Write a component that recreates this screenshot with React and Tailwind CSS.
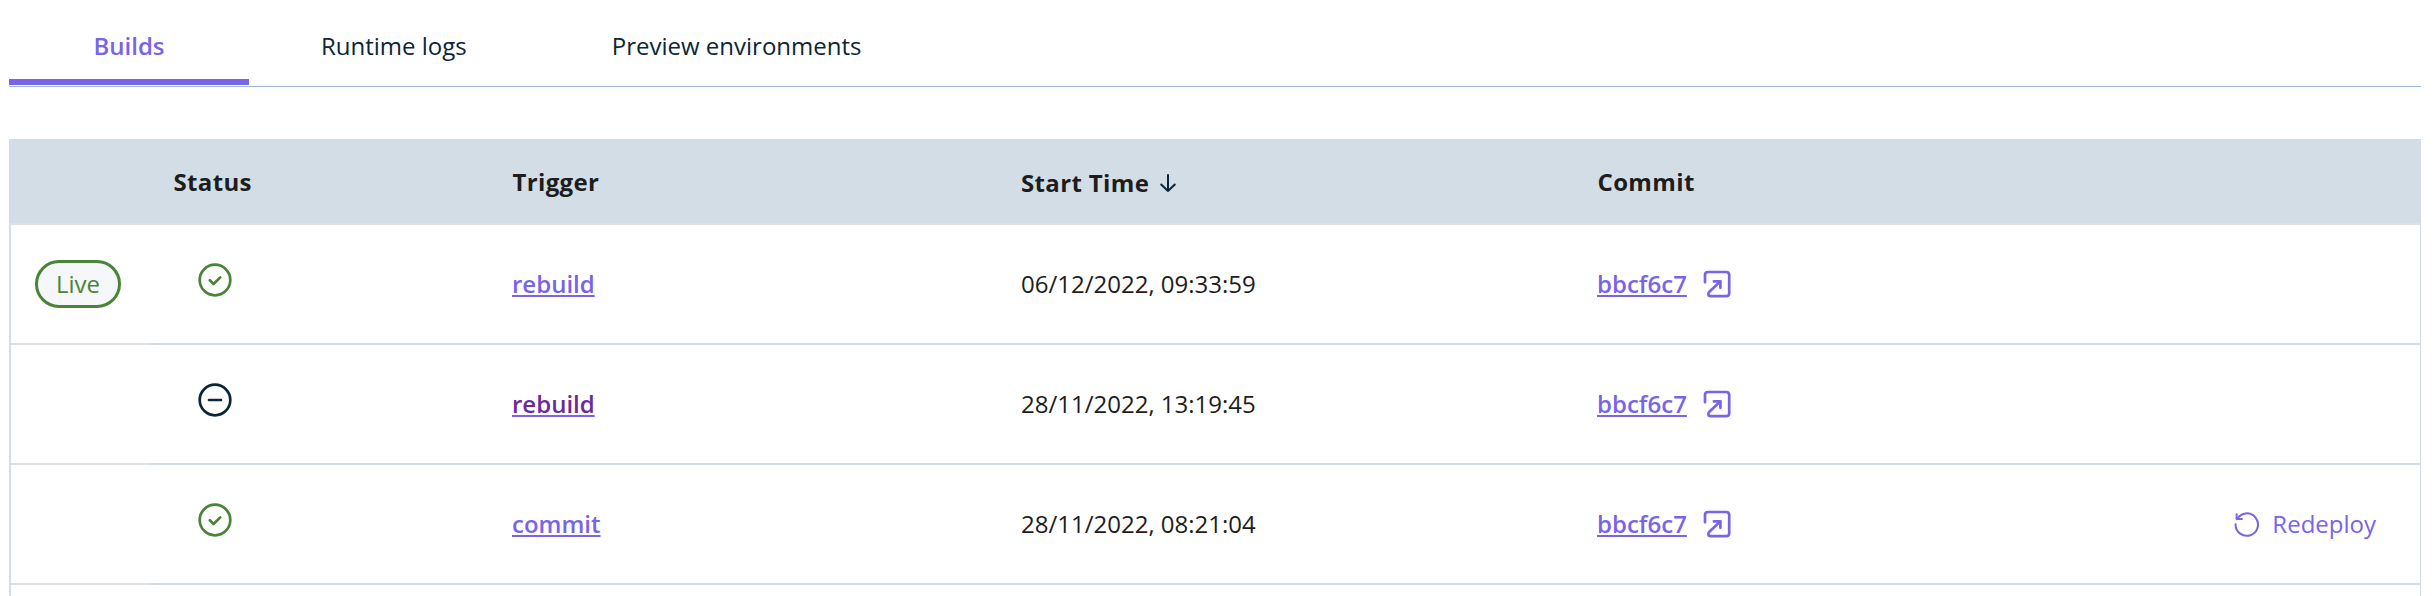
const COLUMNS =
  "grid grid-cols-[138px_339px_508px_576px_1fr]";

function SuccessIcon() {
  return (
    <svg className="h-[34px] w-[34px]" viewBox="0 0 34 34" fill="none" stroke="#4a8537" strokeWidth="2.7" strokeLinecap="round" strokeLinejoin="round">
      <circle cx="17" cy="17" r="15.3" />
      <path d="M11.8 17.3L15.5 21L22.3 14.4" />
    </svg>
  );
}

function StoppedIcon() {
  return (
    <svg className="h-[34px] w-[34px]" viewBox="0 0 34 34" fill="none" stroke="#0a2638" strokeWidth="2.7" strokeLinecap="round">
      <circle cx="17" cy="17" r="15.3" />
      <path d="M11 17H23" />
    </svg>
  );
}

function ExternalIcon() {
  return (
    <svg className="h-7 w-7" viewBox="0 0 28 28" fill="none" stroke="#7764e8" strokeWidth="2.7" strokeLinecap="round" strokeLinejoin="round">
      <path d="M2 12.2V5Q2 2 5 2H23.2Q26.2 2 26.2 5V23.2Q26.2 26.2 23.2 26.2H7.8Q5.4 26.2 5.4 24Q5.4 22.8 6.4 21.8L17.2 11.5" />
      <path d="M10.9 11.4H17.4V17.8" />
    </svg>
  );
}

function RedeployIcon() {
  return (
    <svg className="h-7 w-7" viewBox="0 0 28 28" fill="none" stroke="#7764e8" strokeWidth="2" strokeLinecap="round" strokeLinejoin="round">
      <path d="M2.6 14.3A11.2 11.2 0 1 0 4.2 8.8" />
      <path d="M3.6 4.2V8.9H8.9" />
    </svg>
  );
}

function SortIcon() {
  return (
    <svg className="h-5 w-[18px]" viewBox="0 0 18 20" fill="none" stroke="#0a2638" strokeWidth="2" strokeLinecap="round" strokeLinejoin="round">
      <path d="M9 2V18M2.2 11.5L9 18L15.8 11.5" />
    </svg>
  );
}

const BUILDS = [
  { live: true, ok: true, trigger: "rebuild", time: "06/12/2022, 09:33:59" },
  { ok: false, visited: true, trigger: "rebuild", time: "28/11/2022, 13:19:45" },
  { ok: true, trigger: "commit", time: "28/11/2022, 08:21:04", redeploy: true },
];

const LINK =
  "font-semibold underline decoration-[#7764e8] decoration-2 underline-offset-2";

function BuildRow({ build }) {
  return (
    <div className={`${COLUMNS} h-[120px]`}>
      <div className="flex items-center border-b-2 border-[#e0e0e0] pl-6">
        {build.live && (
          <span className="flex h-12 w-[86px] items-center justify-center rounded-full border-[3px] border-[#4a8537] bg-[#f5f7fb] text-[#4a8537]">
            Live
          </span>
        )}
      </div>
      <div className="flex items-center border-b-2 border-[#d3dde6] pb-2 pl-[49px]">
        {build.ok ? <SuccessIcon /> : <StoppedIcon />}
      </div>
      <div className="flex items-center border-b-2 border-[#d3dde6] pl-6">
        <a className={`${LINK} ${build.visited ? "text-[#6b2a9c]" : "text-[#7764e8]"}`}>{build.trigger}</a>
      </div>
      <div className="flex items-center border-b-2 border-[#d3dde6] pl-[25px]">{build.time}</div>
      <div className="flex items-center justify-between border-b-2 border-[#d3dde6] pr-11 pl-[25px]">
        <div className="flex items-center gap-4">
          <a className={`${LINK} text-[#7764e8]`}>bbcf6c7</a>
          <ExternalIcon />
        </div>
        {build.redeploy && (
          <button className="flex items-center gap-[11px] text-[#7764e8]">
            <RedeployIcon />
            Redeploy
          </button>
        )}
      </div>
    </div>
  );
}

export default function App() {
  return (
    <div className="h-[596px] overflow-hidden bg-white pr-[15px] pl-[9px] font-['Open_Sans',sans-serif] text-[24px] leading-9 text-[#1d1d1d]">
      <nav className="flex h-[87px] border-b border-[#9fb5d6] text-[#0a2638]">
        <div className="flex h-[85px] w-[240px] justify-center border-b-[6px] border-[#7764e8] pt-7 font-semibold text-[#7764e8]">
          Builds
        </div>
        <div className="px-[72px] pt-7">Runtime logs</div>
        <div className="pt-7 pl-[73px]">Preview environments</div>
      </nav>
      <section className="mt-[52px] h-[470px]">
        <div className={`${COLUMNS} h-[86px] items-center border-b-2 border-[#e0e0e0] bg-[#d3dde6] pt-[2px] pl-[2px] font-bold tracking-[0.36px]`}>
          <div />
          <div className="pl-[24.5px]">Status</div>
          <div className="pl-[24.5px]">Trigger</div>
          <div className="flex items-center gap-[10px] pt-[2px] pl-[25px]">
            Start Time
            <SortIcon />
          </div>
          <div className="pl-[25.5px]">Commit</div>
        </div>
        <div className="h-full border-r border-l-2 border-[#d3dde6]">
          {BUILDS.map((build) => (
            <BuildRow key={build.time} build={build} />
          ))}
        </div>
      </section>
    </div>
  );
}
